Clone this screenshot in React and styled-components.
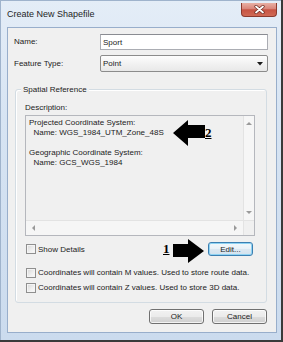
import styled, { createGlobalStyle } from 'styled-components'

const Global = createGlobalStyle`
	html, body {
		margin: 0;
		padding: 0;
		background: #ffffff;
		overflow: hidden;
	}
	* { box-sizing: border-box; }
`

const Window = styled.div`
	position: relative;
	width: 283px;
	height: 342px;
	display: flex;
	flex-direction: column;
	padding: 0 4px 7px 7px;
	background: linear-gradient(180deg, #e4edf7 0%, #d7e4f3 35%, #cbdbee 100%);
	border-right: 2px solid #3a3a3a;
	border-bottom: 2px solid #3a3a3a;
	box-shadow: inset 1px 1px 0 #9fb3cc;
	font-family: "Liberation Sans", Arial, sans-serif;
	font-size: 8px;
	color: #222222;
`

const TitleBar = styled.div`
	height: 27px;
	display: flex;
	align-items: flex-start;
	justify-content: space-between;
`

const Title = styled.div`
	margin-top: 9px;
	font-size: 9px;
	line-height: 11px;
	color: #1e1e1e;
`

const CloseButton = styled.div`
	margin-top: 3px;
	width: 36px;
	height: 14px;
	display: flex;
	align-items: center;
	justify-content: center;
	border: 1px solid #8b3a2e;
	border-top: none;
	border-radius: 0 0 4px 4px;
	background: linear-gradient(180deg, #e8b0a4 0%, #d9857a 45%, #c75443 52%, #d06a55 100%);
`

const Client = styled.div`
	flex: 1;
	display: flex;
	flex-direction: column;
	padding: 6px 8px 0 6px;
	background: #f0f0f0;
	border: 1px solid #98aecb;
`

const FormGrid = styled.div`
	display: grid;
	grid-template-columns: 86px 1fr;
	row-gap: 5px;
	align-items: center;
`

const Label = styled.div`
	line-height: 10px;
`

const TextBox = styled.div`
	height: 16px;
	display: flex;
	align-items: center;
	padding: 0 2px;
	background: #ffffff;
	border: 1px solid #abadb3;
	border-top-color: #8a8c92;
`

const Combo = styled.div`
	height: 17px;
	display: flex;
	align-items: center;
	justify-content: space-between;
	padding: 0 4px 0 2px;
	border: 1px solid #8c8c8c;
	border-radius: 2px;
	background: linear-gradient(180deg, #fdfdfd 0%, #f2f2f2 50%, #e8e8e8 100%);
`

const GroupBox = styled.div`
	position: relative;
	margin: 17px 1px 0 1px;
	padding: 13px 11px 7px 9px;
	border: 1px solid #d3dce3;
	border-radius: 3px;
	box-shadow: inset 1px 1px 0 #ffffff;
`

const Legend = styled.div`
	position: absolute;
	top: -6px;
	left: 5px;
	padding: 0 2px;
	line-height: 11px;
	background: #f0f0f0;
`

const DescBox = styled.div`
	margin-top: 2px;
	height: 121px;
	display: grid;
	grid-template-columns: 1fr 11px;
	grid-template-rows: 1fr 15px;
	border: 1px solid #b5b7bd;
	background: #f0f0f0;
`

const DescText = styled.div`
	padding: 2px 3px;
	white-space: pre;
	line-height: 10px;
	overflow: hidden;
`

const VScroll = styled.div`
	display: flex;
	flex-direction: column;
	justify-content: space-between;
	align-items: center;
	background: #f6f6f6;
	border-left: 1px solid #e3e3e3;
`

const HScroll = styled.div`
	display: flex;
	justify-content: space-between;
	align-items: center;
	background: #f6f6f6;
	border-top: 1px solid #e3e3e3;
`

const ScrollArrow = styled.div`
	width: ${p => (p.$wide ? 15 : 11)}px;
	height: ${p => (p.$wide ? 14 : 15)}px;
	display: flex;
	align-items: center;
	justify-content: center;
`

const Corner = styled.div`
	background: #f0f0f0;
	border-left: 1px solid #e3e3e3;
	border-top: 1px solid #e3e3e3;
`

const DetailsRow = styled.div`
	margin-top: 6px;
	height: 14px;
	display: flex;
	align-items: center;
	justify-content: space-between;
`

const CheckList = styled.div`
	margin-top: 9px;
	display: flex;
	flex-direction: column;
`

const CheckRow = styled.div`
	height: 15px;
	display: flex;
	align-items: center;
	gap: 2px;
	margin-left: 1px;
`

const CheckBox = styled.span`
	width: 10px;
	height: 10px;
	border: 1px solid #8f8f8f;
	background: linear-gradient(135deg, #d6d6d6 0%, #f0f0f0 60%, #fbfbfb 100%);
	box-shadow: inset 0 0 0 1px #f4f4f4;
`

const Button = styled.div`
	width: ${p => p.$w || 55}px;
	height: ${p => p.$h || 15}px;
	margin-right: ${p => p.$mr || 0}px;
	display: flex;
	align-items: center;
	justify-content: center;
	border: 1px solid ${p => (p.$focused ? '#3c7fb1' : '#707070')};
	border-radius: 3px;
	background: ${p =>
		p.$focused
			? 'linear-gradient(180deg, #f3f8fb 0%, #e9f1f7 50%, #dce8f1 51%, #d2e2ee 100%)'
			: 'linear-gradient(180deg, #f2f2f2 0%, #ebebeb 50%, #dddddd 51%, #cfcfcf 100%)'};
	box-shadow: inset 0 0 0 1px ${p => (p.$focused ? '#8fd3f3' : 'rgba(255,255,255,0.75)')};
`

const ButtonRow = styled.div`
	margin: 6px 1px 0 0;
	display: flex;
	justify-content: flex-end;
	gap: 8px;
`

const Arrow = styled.svg`
	position: absolute;
	left: ${p => p.$x}px;
	top: ${p => p.$y}px;
`

const Num = styled.span`
	position: absolute;
	left: ${p => p.$x}px;
	top: ${p => p.$y}px;
	font-family: "Liberation Serif", "Times New Roman", serif;
	font-weight: bold;
	font-size: 13px;
	line-height: 13px;
	text-decoration: underline;
	color: #000;
`

const Tri = ({ dir }) => {
	const pts = {
		up: '0,4 3,1 6,4',
		down: '0,1 3,4 6,1',
		left: '4,0 1,3 4,6',
		right: '1,0 4,3 1,6',
	}[dir]
	return (
		<svg width="6" height="6" viewBox="0 0 6 6">
			<polygon points={pts} fill="#9a9a9a" />
		</svg>
	)
}

const Check = ({ children }) => (
	<CheckRow>
		<CheckBox />
		<span>{children}</span>
	</CheckRow>
)

const desc = `Projected Coordinate System:
  Name: WGS_1984_UTM_Zone_48S

Geographic Coordinate System:
  Name: GCS_WGS_1984`

export default function App() {
	return (
		<>
			<Global />
			<Window>
				<TitleBar>
					<Title>Create New Shapefile</Title>
					<CloseButton>
						<svg width="11" height="9" viewBox="0 0 11 9">
							<path d="M2 1.5 L9 7.5 M9 1.5 L2 7.5" stroke="#6a2a20" strokeWidth="3.2" strokeLinecap="round" />
							<path d="M2 1.5 L9 7.5 M9 1.5 L2 7.5" stroke="#ffffff" strokeWidth="1.8" strokeLinecap="round" />
						</svg>
					</CloseButton>
				</TitleBar>
				<Client>
					<FormGrid>
						<Label>Name:</Label>
						<TextBox>Sport</TextBox>
						<Label>Feature Type:</Label>
						<Combo>
							<span>Point</span>
							<svg width="6" height="4" viewBox="0 0 6 4">
								<polygon points="0,0 6,0 3,3.5" fill="#1a1a1a" />
							</svg>
						</Combo>
					</FormGrid>
					<GroupBox>
						<Legend>Spatial Reference</Legend>
						<Label>Description:</Label>
						<DescBox>
							<DescText>{desc}</DescText>
							<VScroll>
								<ScrollArrow><Tri dir="up" /></ScrollArrow>
								<ScrollArrow><Tri dir="down" /></ScrollArrow>
							</VScroll>
							<HScroll>
								<ScrollArrow $wide><Tri dir="left" /></ScrollArrow>
								<ScrollArrow $wide><Tri dir="right" /></ScrollArrow>
							</HScroll>
							<Corner />
						</DescBox>
						<DetailsRow>
							<Check>Show Details</Check>
							<Button $w={45} $h={14} $mr={2} $focused>Edit...</Button>
						</DetailsRow>
						<CheckList>
							<Check>Coordinates will contain M values. Used to store route data.</Check>
							<Check>Coordinates will contain Z values. Used to store 3D data.</Check>
						</CheckList>
					</GroupBox>
					<ButtonRow>
						<Button>OK</Button>
						<Button>Cancel</Button>
					</ButtonRow>
				</Client>
				<Arrow $x={173} $y={120} width="32" height="26" viewBox="0 0 32 26">
					<polygon points="0,13 15,0 15,5 32,5 32,18 15,18 15,26" fill="#000" />
				</Arrow>
				<Num $x={205} $y={126}>2</Num>
				<Arrow $x={173} $y={239} width="31" height="24" viewBox="0 0 31 24">
					<polygon points="0,5 15,5 15,0 31,12 15,24 15,18 0,18" fill="#000" />
				</Arrow>
				<Num $x={163} $y={242}>1</Num>
			</Window>
		</>
	)
}
